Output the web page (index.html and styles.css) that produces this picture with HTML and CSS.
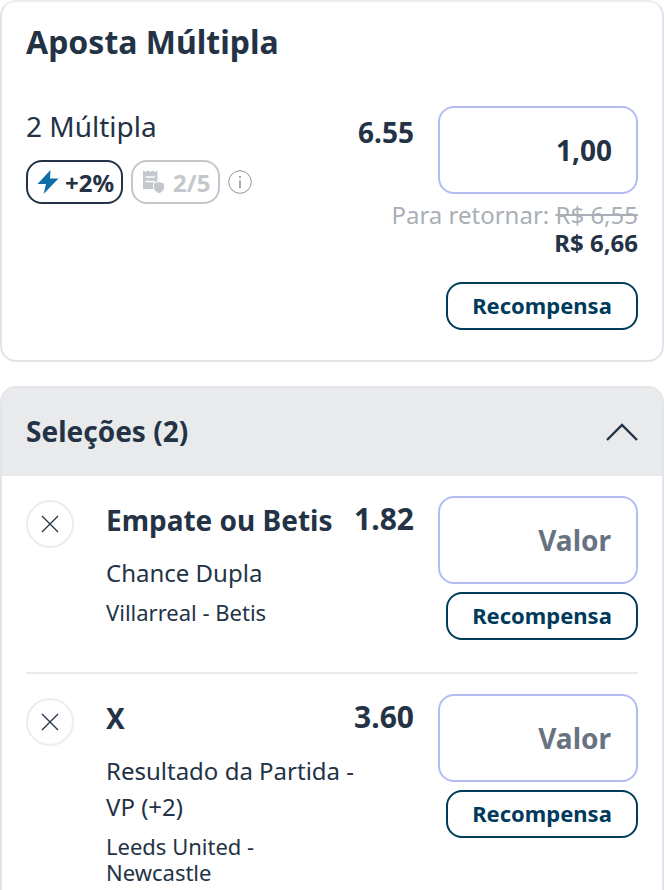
FILE: index.html
```html
<!DOCTYPE html>
<html lang="pt-BR">
<head>
    <meta charset="UTF-8">
    <meta name="viewport" content="width=device-width, initial-scale=1.0">
    <title>Aposta Múltipla</title>
    <link rel="stylesheet" href="styles.css">
</head>
<body>

    <!-- Multiple bet -->
    <section class="card multi">
        <h1>Aposta Múltipla</h1>
        <div class="multi-row">
            <div class="multi-info">
                <p class="multi-name">2 Múltipla</p>
                <div class="badges">
                    <span class="badge badge-on">
                        <svg class="bolt" viewBox="0 0 22 24"><path d="M13.500 0 .5 14h8.500L6.500 24 21.500 8.500H13z" fill="#0f6ea8"/></svg>
                        +2%
                    </span>
                    <span class="badge badge-off">
                        <svg class="ticket" viewBox="0 0 22 24"><path d="M0 .5l2.400 1.500L4.800.5 7.200 2 9.600.5 12 2l2.400-1.500V19H0z" fill="#c4c7cc"/><path d="M2.500 7h9.500M2.500 11.500h9.500" stroke="#fff" stroke-width="1.500"/><path d="M16 11.500l5.500 1.800v4.200c0 3-2.500 5-5.500 6.200-3-1.200-5.500-3.200-5.500-6.200v-4.200z" fill="#c4c7cc" stroke="#fff" stroke-width="1"/></svg>
                        2/5
                    </span>
                    <svg class="info" viewBox="0 0 24 24"><circle cx="12" cy="12" r="11.300" fill="none" stroke="#8e949c" stroke-width="1"/><path d="M12 10.500v7.500" stroke="#8e949c" stroke-width="1.600"/><circle cx="12" cy="7" r="1.100" fill="#8e949c"/></svg>
                </div>
            </div>
            <div class="odd">6.55</div>
            <div class="stake-col">
                <div class="stake">1,00</div>
            </div>
        </div>
        <div class="returns">
            <p class="returns-old">Para retornar: <s>R$ 6,55</s></p>
            <p class="returns-new">R$ 6,66</p>
            <button class="reward">Recompensa</button>
        </div>
    </section>

    <!-- Selections -->
    <section class="card selections">
        <header class="sel-head">
            <h2>Seleções (2)</h2>
            <svg class="chevron" viewBox="0 0 32 18"><path d="M1 17 16 2l15 15" fill="none" stroke="#233345" stroke-width="2.400"/></svg>
        </header>

        <div class="sel">
            <button class="remove"><svg viewBox="0 0 18 18"><path d="M1 1l16 16M17 1 1 17" stroke="#233345" stroke-width="1.300"/></svg></button>
            <div class="sel-text">
                <h3>Empate ou Betis</h3>
                <p class="market">Chance Dupla</p>
                <p class="match">Villarreal - Betis</p>
            </div>
            <div class="odd">1.82</div>
            <div class="stake-col">
                <div class="stake empty">Valor</div>
                <button class="reward">Recompensa</button>
            </div>
        </div>

        <div class="sel">
            <button class="remove"><svg viewBox="0 0 18 18"><path d="M1 1l16 16M17 1 1 17" stroke="#233345" stroke-width="1.300"/></svg></button>
            <div class="sel-text">
                <h3>X</h3>
                <p class="market">Resultado da Partida - VP (+2)</p>
                <p class="match">Leeds United - Newcastle</p>
            </div>
            <div class="odd">3.60</div>
            <div class="stake-col">
                <div class="stake empty">Valor</div>
                <button class="reward">Recompensa</button>
            </div>
        </div>
    </section>

</body>
</html>
```

FILE: styles.css
```css
* { margin: 0; padding: 0; box-sizing: border-box; }
html, body { height: 890px; overflow: hidden; }
body { background: #fff; color: #233345; font-family: "Noto Sans", sans-serif; }

.card { border: 2px solid #e3e4e8; border-radius: 16px; background: #fff; }

/* Multiple bet */
.multi { height: 362px; padding: 20px 24px 0; border-top-color: #eceded; }
h1 { font-size: 32px; line-height: 40px; font-weight: 700; }
.multi-row { display: flex; margin-top: 44px; }
.multi-info { flex: 1; height: 88px; }
.multi-name { font-size: 28px; line-height: 40px; }
.badges { display: flex; align-items: center; gap: 8px; margin-top: 14px; }
.badge { display: flex; align-items: center; height: 44px; padding: 0 7px 0 9px; gap: 6px; border: 2px solid #233345; border-radius: 16px; font-size: 24px; font-weight: 700; }
.badge-off { padding-left: 10px; border-color: #c4c7cc; color: #c4c7cc; }
.bolt { width: 22px; height: 24px; }
.ticket { width: 22px; height: 24px; margin-right: 2px; }
.info { width: 24px; height: 24px; }

.odd { font-size: 28px; line-height: 36px; font-weight: 700; text-align: right; margin: 8px 24px 0 0; }
.sel .odd { margin-top: 5px; font-size: 30px; }
.stake-col { width: 200px; display: flex; flex-direction: column; align-items: flex-end; gap: 8px; }
.stake { width: 200px; height: 88px; padding-right: 24px; border: 2px solid #b4bcf4; border-radius: 16px; font-size: 28px; line-height: 84px; font-weight: 700; text-align: right; }
.stake.empty { padding-right: 25px; color: #677380; }

.returns { display: flex; flex-direction: column; align-items: flex-end; margin-top: 7px; }
.returns-old { font-size: 24px; line-height: 28px; color: #a9afb6; }
.returns-new { font-size: 24px; line-height: 28px; font-weight: 700; }
.returns .reward { margin-top: 25px; }

.reward { width: 192px; height: 48px; padding-bottom: 2px; background: #fff; border: 2px solid #003a5c; border-radius: 16px; color: #003a5c; font-family: inherit; font-size: 22px; font-weight: 700; }

/* Selections */
.selections { margin-top: 24px; overflow: hidden; }
.sel-head { display: flex; align-items: center; justify-content: space-between; height: 88px; padding: 0 24px; background: #e9eaec; }
h2 { font-size: 28px; line-height: 36px; font-weight: 700; margin-bottom: 2px; }
.chevron { width: 32px; height: 18px; }

.sel { display: flex; margin: 0 24px; padding: 20px 0 32px; border-top: 2px solid #e9eaec; }
.sel-head + .sel { border-top: none; }
.remove { flex: none; width: 48px; height: 48px; margin: 4px 32px 0 0; background: #fff; border: 2px solid #ecedee; border-radius: 50%; display: flex; align-items: center; justify-content: center; }
.remove svg { width: 18px; height: 18px; }
.sel-text { flex: 1; }
h3 { font-size: 28px; line-height: 36px; font-weight: 700; margin-top: 6px; }
.market { font-size: 24px; line-height: 36px; margin-top: 17px; }
.match { font-size: 22px; line-height: 26px; margin-top: 8px; }
```
